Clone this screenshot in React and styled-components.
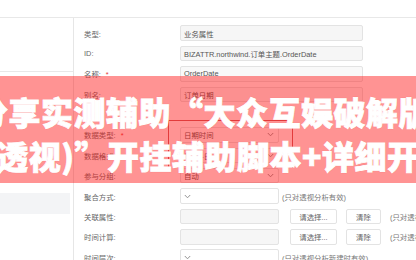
import React from "react";
import styled, { createGlobalStyle } from "styled-components";

const GlobalStyle = createGlobalStyle`
  html, body {
    margin: 0;
    padding: 0;
    background: #fff;
  }
  body {
    font-family: "Liberation Sans", "Noto Sans CJK SC", sans-serif;
    overflow: hidden;
  }
`;

const rows = [
  { label: "类型:", kind: "input", value: "业务属性", gray: true },
  { label: "ID:", kind: "input", value: "BIZATTR.northwind.订单主题.OrderDate", gray: true },
  { label: "名称:", required: true, kind: "input", value: "OrderDate" },
  { label: "别名:", kind: "input", value: "订单日期" },
  { label: "分类:", kind: "none" },
  { label: "数据类型:", required: true, kind: "select", value: "日期时间" },
  { label: "数据格式:", kind: "select", value: "年-月-日" },
  { label: "参与分组:", kind: "select", value: "自动" },
  { label: "聚合方式:", kind: "select", value: "", note: "(只对透视分析有效)" },
  { label: "关联属性:", kind: "picker" },
  { label: "时间计算:", kind: "picker" },
  { label: "时间层次:", kind: "select", value: "", note: "(只对透视分析新建时有效)" },
];

const Chevron = () => (
  <svg width="7" height="5" viewBox="0 0 7 5">
    <path d="M0.8 1 L3.5 3.8 L6.2 1" fill="none" stroke="#888" strokeWidth="0.9" />
  </svg>
);

const Field = ({ row }) => {
  if (row.kind === "input") {
    return <Input $gray={row.gray}>{row.value}</Input>;
  }
  if (row.kind === "select") {
    return (
      <>
        <Select>
          {row.value}
          <Chevron />
        </Select>
        {row.note && <Note>{row.note}</Note>}
      </>
    );
  }
  if (row.kind === "picker") {
    return (
      <>
        <Select $gray />
        <Button $w={47}>请选择...</Button>
        <Button $w={35}>清除</Button>
        <Note>(只对透视分析有效)</Note>
      </>
    );
  }
  return null;
};

const App = () => {
  return (
    <Page>
      <GlobalStyle />
      <TopBar />
      <Body>
        <LeftPanel>
          <TreeBox />
          <SelectedItem />
        </LeftPanel>
        <Form>
          {rows.map((row) => (
            <Row key={row.label}>
              <Label>
                {row.label}
                {row.required && <Star>*</Star>}
              </Label>
              <FieldCell>
                <Field row={row} />
              </FieldCell>
            </Row>
          ))}
        </Form>
      </Body>
      <Banner>
        <Frame />
        <BannerLine $shift={-24}>分享实测辅助“大众互娱破解版</BannerLine>
        <BannerLine $shift={-17}>(透视)”开挂辅助脚本+详细开</BannerLine>
      </Banner>
    </Page>
  );
};

export default App;

const Page = styled.div`
  position: relative;
  width: 416px;
  height: 260px;
  overflow: hidden;
  background: #fff;
`;

const TopBar = styled.div`
  height: 17px;
  border-bottom: 1px solid #e8e8e8;
`;

const Body = styled.div`
  display: flex;
  height: 242px;
`;

const LeftPanel = styled.div`
  width: 77px;
  border-right: 1px solid #e6e6e6;
  display: flex;
  flex-direction: column;
`;

const TreeBox = styled.div`
  width: 73px;
  height: 53px;
  border-bottom: 1px solid #e8e8e8;
`;

const SelectedItem = styled.div`
  width: 70px;
  height: 21px;
  margin-top: 121px;
  background: #f3f4f6;
`;

const Form = styled.div`
  flex: 1;
  padding: 5px 0 0 10px;
`;

const Row = styled.div`
  display: grid;
  grid-template-columns: 96px 1fr;
  align-items: center;
  height: 20.36px;
`;

const Label = styled.div`
  font-size: 7.4px;
  color: #666;
  white-space: nowrap;
`;

const Star = styled.span`
  color: #e53935;
  margin-left: 5px;
`;

const FieldCell = styled.div`
  display: flex;
  align-items: center;
  gap: 3px;
`;

const Input = styled.div`
  box-sizing: border-box;
  width: 183px;
  height: 15.5px;
  padding: 0 3px;
  display: flex;
  align-items: center;
  border: 1px solid #e3e3e3;
  border-radius: 2px;
  background: ${(p) => (p.$gray ? "#f6f6f6" : "#f9f9f9")};
  font-size: 7.4px;
  color: #555;
  white-space: nowrap;
`;

const Select = styled.div`
  box-sizing: border-box;
  width: 99px;
  height: 15.5px;
  padding: 0 4px 0 3px;
  display: flex;
  align-items: center;
  justify-content: space-between;
  border: 1px solid #e3e3e3;
  border-radius: 2px;
  background: ${(p) => (p.$gray ? "#f6f6f6" : "#fff")};
  font-size: 7.4px;
  color: #555;
  margin-right: ${(p) => (p.$gray ? "8px" : "0")};
`;

const Button = styled.div`
  box-sizing: border-box;
  width: ${(p) => p.$w}px;
  height: 15.5px;
  display: flex;
  align-items: center;
  justify-content: center;
  border: 1px solid #e3e3e3;
  border-radius: 2px;
  background: #fff;
  font-size: 7.4px;
  color: #666;
  margin-right: 6px;
  flex-shrink: 0;
`;

const Note = styled.span`
  font-size: 7.4px;
  color: #777;
  white-space: nowrap;
`;

const Banner = styled.div`
  position: absolute;
  left: 0;
  right: 0;
  top: 76px;
  height: 107px;
  background: rgba(255, 20, 20, 0.46);
  padding-top: 13px;
  box-sizing: border-box;
  overflow: hidden;
`;

const Frame = styled.div`
  position: absolute;
  left: 168px;
  top: 44px;
  width: 123px;
  height: 47px;
  border: 1px solid #e23b3b;
  border-bottom: none;
`;

const BannerLine = styled.div`
  position: relative;
  margin-left: ${(p) => p.$shift}px;
  font-family: "Noto Sans CJK SC", sans-serif;
  font-weight: 900;
  font-size: 32px;
  line-height: 44px;
  letter-spacing: 0.5px;
  color: #fff;
  white-space: nowrap;
  -webkit-text-stroke: 0.9px #fff;
  text-shadow: 0 0 1px rgba(200, 30, 30, 0.6);
`;
